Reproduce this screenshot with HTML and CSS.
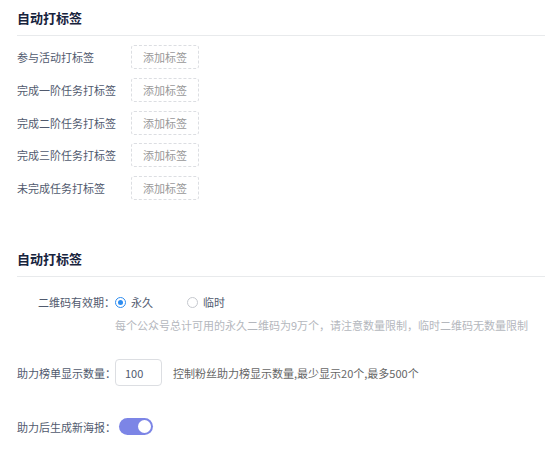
FILE: index.html
```html
<!DOCTYPE html>
<html lang="zh-CN">
<head>
<meta charset="utf-8">
<title>自动打标签</title>
<link rel="stylesheet" href="styles.css">
</head>
<body>
<section class="section">
  <div class="section-head">自动打标签</div>
  <div class="tag-list">
    <div class="tag-row"><span class="tag-label">参与活动打标签</span><span class="tag-btn">添加标签</span></div>
    <div class="tag-row"><span class="tag-label">完成一阶任务打标签</span><span class="tag-btn">添加标签</span></div>
    <div class="tag-row"><span class="tag-label">完成二阶任务打标签</span><span class="tag-btn">添加标签</span></div>
    <div class="tag-row"><span class="tag-label">完成三阶任务打标签</span><span class="tag-btn">添加标签</span></div>
    <div class="tag-row"><span class="tag-label">未完成任务打标签</span><span class="tag-btn">添加标签</span></div>
  </div>
</section>
<section class="section section-second">
  <div class="section-head">自动打标签</div>
  <div class="form">
    <div class="form-row row-qr">
      <span class="form-label">二维码有效期：</span>
      <label class="radio checked"><span class="radio-dot"></span><span class="radio-text">永久</span></label>
      <label class="radio second"><span class="radio-dot"></span><span class="radio-text">临时</span></label>
    </div>
    <div class="hint hint-light">每个公众号总计可用的永久二维码为9万个，请注意数量限制，临时二维码无数量限制</div>
    <div class="form-row row-count">
      <span class="form-label">助力榜单显示数量：</span>
      <input class="num-input" type="text" value="100">
      <span class="hint-inline">控制粉丝助力榜显示数量,最少显示20个,最多500个</span>
    </div>
    <div class="form-row row-toggle">
      <span class="form-label">助力后生成新海报：</span>
      <span class="switch"><span class="knob"></span></span>
    </div>
  </div>
</section>
</body>
</html>
```
FILE: styles.css
```css
html, body {
  margin: 0;
  padding: 0;
  background: #fff;
}
body {
  font-family: "Noto Sans CJK SC", "Microsoft YaHei", sans-serif;
  font-size: 11px;
  color: #515a6e;
}
.section-head {
  margin-left: 17px;
  height: 35px;
  display: flex;
  align-items: center;
  border-bottom: 1px solid #e8eaec;
  font-size: 13px;
  font-weight: 700;
  color: #17233d;
}
.tag-list {
  padding: 9px 0 0 17px;
  display: flex;
  flex-direction: column;
  gap: 8.75px;
}
.tag-row {
  display: flex;
  align-items: center;
  height: 24px;
}
.tag-label {
  width: 114px;
  white-space: nowrap;
  line-height: 16px;
}
.tag-btn {
  box-sizing: border-box;
  width: 68px;
  height: 24px;
  border: 1px dashed #dcdee2;
  border-radius: 3px;
  display: flex;
  align-items: center;
  justify-content: center;
  color: #999;
  font-size: 11px;
}
.section-second {
  margin-top: 41px;
}
.form {
  padding-left: 17px;
}
.form-row {
  display: flex;
  align-items: center;
}
.form-label {
  width: 98px;
  flex: none;
  text-align: right;
  white-space: nowrap;
  line-height: 16px;
}
.row-qr {
  margin-top: 16px;
  height: 18px;
}
.radio {
  display: flex;
  align-items: center;
  line-height: 16px;
}
.radio.second {
  margin-left: 34px;
}
.radio-dot {
  box-sizing: border-box;
  width: 11px;
  height: 11px;
  border: 1px solid #c5c8ce;
  border-radius: 50%;
  background: #fff;
  position: relative;
}
.radio.checked .radio-dot {
  border-color: #2d8cf0;
}
.radio.checked .radio-dot::after {
  content: "";
  position: absolute;
  left: 2px;
  top: 2px;
  width: 5px;
  height: 5px;
  border-radius: 50%;
  background: #2d8cf0;
}
.radio-text {
  margin-left: 5px;
}
.radio.second .radio-text {
  margin-left: 5px;
}
.hint {
  line-height: 16px;
  margin-top: 6px;
  padding-left: 98px;
  white-space: nowrap;
}
.hint-light {
  color: #b4b7bd;
}
.row-count {
  margin-top: 26px;
  height: 27px;
}
.num-input {
  box-sizing: border-box;
  width: 47px;
  height: 27px;
  border: 1px solid #dcdee2;
  border-radius: 4px;
  padding: 0 0 0 9px;
  margin: 0;
  font-family: inherit;
  font-size: 11px;
  color: #515a6e;
  outline: none;
  background: #fff;
}
.hint-inline {
  margin-left: 11px;
  color: #666;
  white-space: nowrap;
  line-height: 16px;
}
.row-toggle {
  margin-top: 32px;
  height: 17px;
}
.switch {
  margin-left: 4px;
  width: 34px;
  height: 17px;
  border-radius: 9px;
  background: #7c85e6;
  position: relative;
  display: inline-block;
}
.knob {
  position: absolute;
  right: 2px;
  top: 2px;
  width: 13px;
  height: 13px;
  border-radius: 50%;
  background: #fff;
}
```
